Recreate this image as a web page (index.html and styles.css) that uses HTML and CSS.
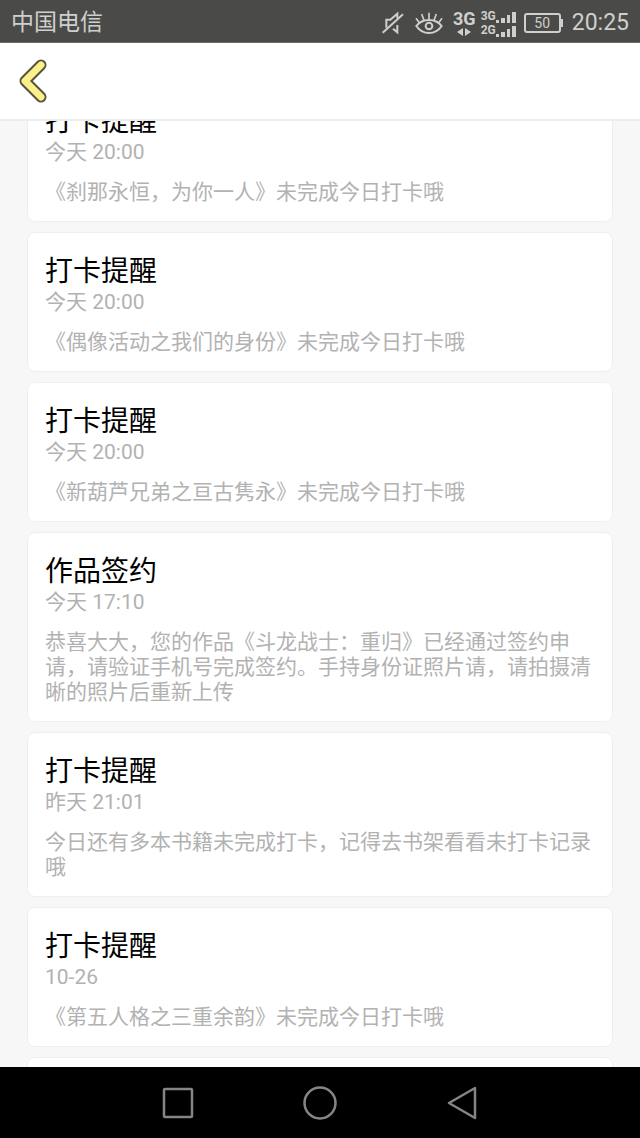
FILE: index.html
```html
<!DOCTYPE html>
<html lang="zh-CN">
<head>
    <meta charset="UTF-8">
    <meta name="viewport" content="width=device-width, initial-scale=1.0">
    <title>消息</title>
    <link rel="stylesheet" href="styles.css">
</head>
<body>
    <div class="status-bar">
        <span class="carrier">中国电信</span>
        <div class="status-icons">
            <!-- Muted speaker -->
            <svg width="22" height="24" viewBox="0 0 66 72" fill="none" stroke="currentColor" stroke-width="6">
                <path d="M13 50V26H25L46 8V22M46 42V64L33 53"/>
                <path d="M2 65L63 10"/>
            </svg>
            <!-- Eye comfort -->
            <svg class="icon-eye" width="28" height="24" viewBox="0 0 84 72" fill="none" stroke="currentColor" stroke-width="6">
                <path d="M4 45C14 32 28 27 42 27S70 32 80 45C70 60 56 66 42 66S14 60 4 45Z"/>
                <circle cx="42" cy="45" r="10"/>
                <path d="M42 26V5M27 28L20 9M57 28L64 9M13 35L3 22M71 35L81 22" stroke-width="5"/>
            </svg>
            <div class="network">
                <span>3G</span>
                <svg width="14" height="8" viewBox="0 0 14 8" fill="currentColor">
                    <path d="M6 0V8L0 4ZM8 0V8L14 4Z"/>
                </svg>
            </div>
            <div class="signals">
                <div class="signal">
                    <span>3G</span>
                    <svg width="20" height="12" viewBox="0 0 20 12" fill="currentColor">
                        <path d="M0 9h3v3h-3zM5 7h4v5h-4zM11 4h3v8h-3zM16 1h4v11h-4z"/>
                    </svg>
                </div>
                <div class="signal">
                    <span>2G</span>
                    <svg width="20" height="12" viewBox="0 0 20 12" fill="currentColor">
                        <path d="M0 9h3v3h-3zM5 7h4v5h-4zM11 4h3v8h-3zM16 1h4v11h-4z"/>
                    </svg>
                </div>
            </div>
            <span class="battery">50</span>
            <span class="clock">20:25</span>
        </div>
    </div>

    <header class="top-bar">
        <button class="back-btn" aria-label="返回">
            <svg width="30" height="44" viewBox="0 0 30 44" fill="none" stroke-linecap="round" stroke-linejoin="round">
                <path d="M23 6L7 22L23 38" stroke="#55543f" stroke-width="11"/>
                <path d="M23 6L7 22L23 38" stroke="#fbf08a" stroke-width="7"/>
            </svg>
        </button>
    </header>

    <main class="message-view">
        <div class="message-list">
            <article class="card">
                <h2>打卡提醒</h2>
                <time>今天 20:00</time>
                <p>《刹那永恒，为你一人》未完成今日打卡哦</p>
            </article>
            <article class="card">
                <h2>打卡提醒</h2>
                <time>今天 20:00</time>
                <p>《偶像活动之我们的身份》未完成今日打卡哦</p>
            </article>
            <article class="card">
                <h2>打卡提醒</h2>
                <time>今天 20:00</time>
                <p>《新葫芦兄弟之亘古隽永》未完成今日打卡哦</p>
            </article>
            <article class="card">
                <h2>作品签约</h2>
                <time>今天 17:10</time>
                <p>恭喜大大，您的作品《斗龙战士：重归》已经通过签约申请，请验证手机号完成签约。手持身份证照片请，请拍摄清晰的照片后重新上传</p>
            </article>
            <article class="card">
                <h2>打卡提醒</h2>
                <time>昨天 21:01</time>
                <p>今日还有多本书籍未完成打卡，记得去书架看看未打卡记录哦</p>
            </article>
            <article class="card">
                <h2>打卡提醒</h2>
                <time>10-26</time>
                <p>《第五人格之三重余韵》未完成今日打卡哦</p>
            </article>
            <article class="card"></article>
        </div>
    </main>

    <nav class="nav-bar">
        <button aria-label="最近任务">
            <svg width="32" height="32" viewBox="0 0 32 32" fill="none" stroke="currentColor" stroke-width="2.5">
                <rect x="2" y="2" width="28" height="28" rx="1"/>
            </svg>
        </button>
        <button aria-label="主屏幕">
            <svg width="34" height="34" viewBox="0 0 34 34" fill="none" stroke="currentColor" stroke-width="2.5">
                <circle cx="17" cy="17" r="15.5"/>
            </svg>
        </button>
        <button aria-label="返回上一级">
            <svg width="30" height="34" viewBox="0 0 30 34" fill="none" stroke="currentColor" stroke-width="2.5" stroke-linejoin="round">
                <path d="M28 2V32L2 17Z"/>
            </svg>
        </button>
    </nav>
</body>
</html>
```
FILE: styles.css
```css
/* General Styles */
* {
    margin: 0;
    padding: 0;
    box-sizing: border-box;
}

body {
    display: flex;
    flex-direction: column;
    height: 100vh;
    overflow: hidden;
    background-color: #f7f7f7;
    font-family: Roboto, "Noto Sans CJK SC", sans-serif;
}

button {
    display: flex;
    align-items: center;
    justify-content: center;
    background: none;
    border: none;
    cursor: pointer;
}

svg {
    display: block;
}

/* Status Bar */
.status-bar {
    display: flex;
    flex: none;
    align-items: center;
    justify-content: space-between;
    height: 43px;
    padding: 3px 11px 0;
    background-color: #4a4a48;
    border-bottom: 1px solid #6b6b69;
    color: #cfcfcd;
}

.carrier,
.clock {
    font-size: 23px;
    line-height: 32px;
}

.status-icons {
    display: flex;
    align-items: center;
}

.icon-eye {
    margin-left: 11px;
}

.network {
    display: flex;
    flex-direction: column;
    align-items: center;
    margin-left: 10px;
    font-size: 18px;
    font-weight: bold;
    line-height: 18px;
}

.signals {
    margin-left: 5px;
    font-size: 12px;
    font-weight: bold;
    line-height: 14px;
}

.signal {
    display: flex;
    align-items: flex-end;
}

/* Battery with its small tip on the right */
.battery {
    position: relative;
    width: 37px;
    margin: 0 11px 0 8px;
    border: 2px solid currentColor;
    border-radius: 3px;
    font-size: 14px;
    line-height: 16px;
    text-align: center;
}

.battery::after {
    content: "";
    position: absolute;
    top: 4px;
    right: -4px;
    width: 2px;
    height: 8px;
    background-color: currentColor;
}

/* Top Bar */
.top-bar {
    display: flex;
    flex: none;
    align-items: center;
    height: 78px;
    padding: 0 18px;
    background-color: #fff;
    border-bottom: 2px solid #ececec;
}

/* Messages */
.message-view {
    flex: 1;
    min-height: 0;
    overflow: hidden;
}

.message-list {
    display: flex;
    flex-direction: column;
    gap: 10px;
    margin-top: -39px;
    padding: 0 27px;
}

.card {
    min-height: 140px;
    padding: 23px 17px 16px;
    background-color: #fff;
    border: 1px solid #efefef;
    border-radius: 8px;
}

.card h2 {
    font-size: 28px;
    font-weight: normal;
    line-height: 32px;
    color: #000;
}

.card time {
    display: block;
    margin-bottom: 14px;
    font-size: 21px;
    line-height: 28px;
    color: #b2b2b2;
}

.card p {
    font-size: 21px;
    line-height: 25px;
    color: #b2b2b2;
}

/* Navigation Bar */
.nav-bar {
    display: flex;
    flex: none;
    justify-content: center;
    height: 71px;
    background-color: #000;
}

.nav-bar button {
    width: 142px;
    color: #858585;
}
```
